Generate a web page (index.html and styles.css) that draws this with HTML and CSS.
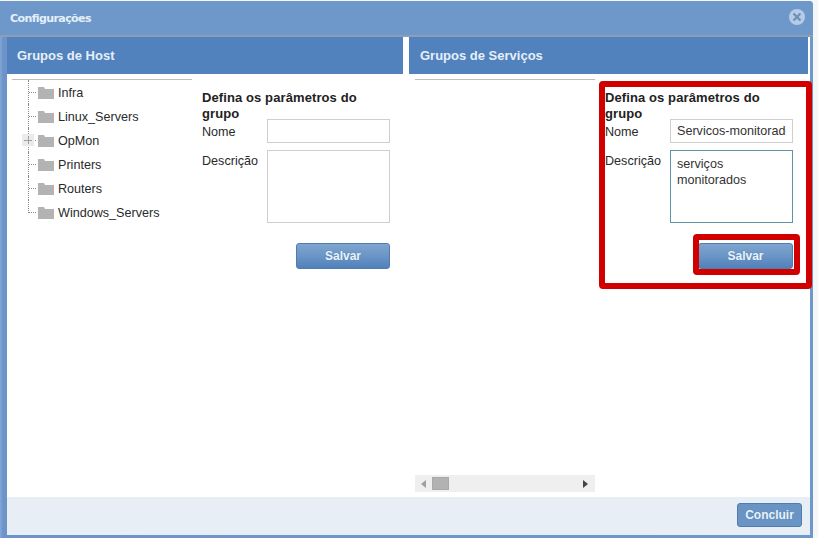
FILE: index.html
```html
<!DOCTYPE html>
<html lang="pt">
<head>
<meta charset="utf-8">
<title>Configurações</title>
<link rel="stylesheet" href="styles.css">
</head>
<body>
<div class="dialog">
  <header class="titlebar">
    <span class="title">Configurações</span>
    <svg class="close" width="18" height="18" viewBox="0 0 18 18" aria-label="Fechar">
      <circle cx="9" cy="9" r="8" fill="#b5cbe7"/>
      <path d="M5.5 5.5l7 7M12.5 5.5l-7 7" stroke="#6f8fb8" stroke-width="2.2" fill="none"/>
    </svg>
  </header>
  <main class="content">
    <section class="panel panel-host">
      <h2 class="panel-head">Grupos de Host</h2>
      <div class="panel-body">
        <div class="tree-col">
          <ul class="tree">
            <li class="row"><span class="branch"></span><svg class="folder" width="16" height="13" viewBox="0 0 16 13"><path d="M0 1h6l1 2h9v10H0z" fill="#b3b3b3"/></svg><span class="node">Infra</span></li>
            <li class="row"><span class="branch"></span><svg class="folder" width="16" height="13" viewBox="0 0 16 13"><path d="M0 1h6l1 2h9v10H0z" fill="#b3b3b3"/></svg><span class="node">Linux_Servers</span></li>
            <li class="row"><span class="branch"></span><span class="plus"></span><svg class="folder" width="16" height="13" viewBox="0 0 16 13"><path d="M0 1h6l1 2h9v10H0z" fill="#b3b3b3"/></svg><span class="node">OpMon</span></li>
            <li class="row"><span class="branch"></span><svg class="folder" width="16" height="13" viewBox="0 0 16 13"><path d="M0 1h6l1 2h9v10H0z" fill="#b3b3b3"/></svg><span class="node">Printers</span></li>
            <li class="row"><span class="branch"></span><svg class="folder" width="16" height="13" viewBox="0 0 16 13"><path d="M0 1h6l1 2h9v10H0z" fill="#b3b3b3"/></svg><span class="node">Routers</span></li>
            <li class="row"><span class="branch"></span><svg class="folder" width="16" height="13" viewBox="0 0 16 13"><path d="M0 1h6l1 2h9v10H0z" fill="#b3b3b3"/></svg><span class="node">Windows_Servers</span></li>
          </ul>
        </div>
        <form class="group-form">
          <h3 class="form-title">Defina os parâmetros do grupo</h3>
          <div class="fields">
            <label class="lbl lbl-name">Nome</label>
            <input class="inp" type="text" value="">
            <label class="lbl lbl-desc">Descrição</label>
            <textarea class="txt"></textarea>
          </div>
          <div class="actions"><button type="button" class="btn btn-save">Salvar</button></div>
        </form>
      </div>
    </section>
    <section class="panel panel-service">
      <h2 class="panel-head">Grupos de Serviços</h2>
      <div class="panel-body">
        <div class="tree-col">
          <div class="tree-space"></div>
          <div class="scrollbar">
            <svg width="6" height="8" viewBox="0 0 6 8" class="arrow-left"><path d="M5 0v8L0 4z" fill="#a0a0a0"/></svg>
            <span class="thumb"></span>
            <svg width="6" height="8" viewBox="0 0 6 8" class="arrow-right"><path d="M0 0v8l5-4z" fill="#444"/></svg>
          </div>
        </div>
        <form class="group-form">
          <h3 class="form-title">Defina os parâmetros do grupo</h3>
          <div class="fields">
            <label class="lbl lbl-name">Nome</label>
            <input class="inp" type="text" value="Servicos-monitorados">
            <label class="lbl lbl-desc">Descrição</label>
            <textarea class="txt txt-focus">serviços
monitorados</textarea>
          </div>
          <div class="actions"><button type="button" class="btn btn-save btn-active">Salvar</button></div>
        </form>
      </div>
    </section>
    <span class="mark mark-form"></span>
    <span class="mark mark-button"></span>
  </main>
  <footer class="foot">
    <button type="button" class="btn btn-done">Concluir</button>
  </footer>
</div>
</body>
</html>
```
FILE: styles.css
```css
* { box-sizing: border-box; }
html, body { margin: 0; height: 100%; }
body {
  background: #f5f6f7;
  font-family: "Liberation Sans", Arial, sans-serif;
  font-size: 12.6px;
  color: #222;
  overflow: hidden;
  padding-top: 1px;
}
.dialog {
  width: 813px;
  height: 537px;
  display: flex;
  flex-direction: column;
  background: linear-gradient(90deg, #83a8d8 0, #6c94c8 3px, #6f98ca 100%);
  border-radius: 0 4px 0 0;
  padding: 0 3px 3px 7px;
}
.titlebar {
  height: 36px;
  flex: none;
  display: flex;
  align-items: center;
  justify-content: space-between;
  background: #6f98ca;
  margin-left: -7px;
  margin-right: -3px;
  padding: 0 7px 2px 10px;
  border-bottom: 2px solid #8a9eb6;
  border-radius: 0 4px 0 0;
}
.title {
  font: bold 11px "DejaVu Sans", sans-serif;
  letter-spacing: -0.6px;
  color: #e4f0f8;
  padding-top: 2px;
}
.content {
  position: relative;
  flex: 1;
  display: flex;
  background: #fff;
  gap: 6px;
  padding-right: 2px;
}
.panel { display: flex; flex-direction: column; }
.panel-host { width: 396px; }
.panel-service { width: 399px; }
.panel-head {
  margin: 0;
  height: 37px;
  flex: none;
  display: flex;
  align-items: center;
  padding: 0 0 1px 10px;
  background: #5282bd;
  color: #e6eff7;
  font-size: 13px;
  font-weight: bold;
}
.panel-service .panel-head { padding-left: 11px; }
.panel-body { flex: 1; display: flex; padding-top: 5px; }
.panel-host .panel-body { padding-left: 5px; }
.panel-service .panel-body { padding-left: 6px; }
.tree-col {
  width: 180px;
  flex: none;
  border-top: 1px solid #bdbdbd;
  display: flex;
  flex-direction: column;
  padding-bottom: 5px;
}
.tree { list-style: none; margin: 0; padding: 0 0 0 16px; }
.row {
  position: relative;
  height: 24px;
  display: flex;
  align-items: center;
  color: #2a2a2a;
}
.node { padding-top: 1px; }
.branch {
  align-self: flex-start;
  width: 8px;
  height: 24px;
  flex: none;
  margin-right: 2px;
  border-left: 1px dotted #8a8a8a;
}
.branch::after {
  content: "";
  display: block;
  height: 12px;
  border-bottom: 1px dotted #8a8a8a;
}
.row:last-child .branch { height: 13px; }
.folder { flex: none; margin-right: 4px; }
.plus {
  position: absolute;
  left: -6px;
  top: 6px;
  width: 12px;
  height: 12px;
  background:
    linear-gradient(#a0a0a0, #a0a0a0) center / 8px 1px no-repeat,
    linear-gradient(#a0a0a0, #a0a0a0) center / 1px 8px no-repeat,
    #ebebeb;
}
.tree-space { flex: 1; }
.scrollbar {
  height: 17px;
  background: #efefef;
  display: flex;
  align-items: center;
  padding: 0 6px;
}
.arrow-left { margin-right: 5px; }
.thumb { width: 17px; height: 13px; background: #b2b2b2; border: 1px solid #a8a8a8; }
.arrow-right { margin-left: auto; }
.group-form { margin-left: 10px; width: 188px; padding-top: 11px; }
.form-title {
  margin: 0;
  font-size: 13px;
  line-height: 16px;
  font-weight: bold;
  color: #222;
  letter-spacing: 0.1px;
}
.fields {
  display: grid;
  grid-template-columns: 65px 123px;
  grid-template-rows: 24px 73px;
  row-gap: 7px;
  margin-top: -3px;
}
.lbl { line-height: 16px; color: #2a2a2a; }
.lbl-name { padding-top: 5px; }
.lbl-desc { padding-top: 3px; }
.inp, .txt {
  margin: 0;
  width: 123px;
  border: 1px solid #cfcfcf;
  background: #fff;
  font: 12.6px "Liberation Sans", Arial, sans-serif;
  color: #333;
  outline: 0;
  padding: 0 6px;
}
.inp { height: 24px; }
.txt { height: 73px; resize: none; line-height: 16px; padding: 5px 6px; overflow: hidden; display: block; }
.txt-focus { border-color: #5f93a8; }
.actions { display: flex; justify-content: flex-end; margin-top: 20px; }
.btn {
  border: 1px solid #4f7dae;
  border-radius: 3px;
  background: linear-gradient(#7fa5d0, #6d97c7 45%, #5181ba);
  color: #eaf3fa;
  font: bold 12px "Liberation Sans", Arial, sans-serif;
  padding: 0;
  text-shadow: 0 0 1px #4f7dae;
}
.btn-save { width: 94px; height: 26px; }
.panel-service .btn-save { width: 95px; }
.btn-done { width: 65px; height: 24px; background: #6a94c4; }
.mark {
  position: absolute;
  border: 6px solid #d00000;
  border-radius: 4px;
  pointer-events: none;
}
.mark-form { left: 592px; top: 44px; width: 213px; height: 208px; }
.mark-button { left: 686px; top: 197px; width: 107px; height: 41px; }
.foot {
  height: 38px;
  flex: none;
  background: #e8eef6;
  display: flex;
  align-items: center;
  justify-content: flex-end;
  padding: 0 8px 2px 0;
}
```
